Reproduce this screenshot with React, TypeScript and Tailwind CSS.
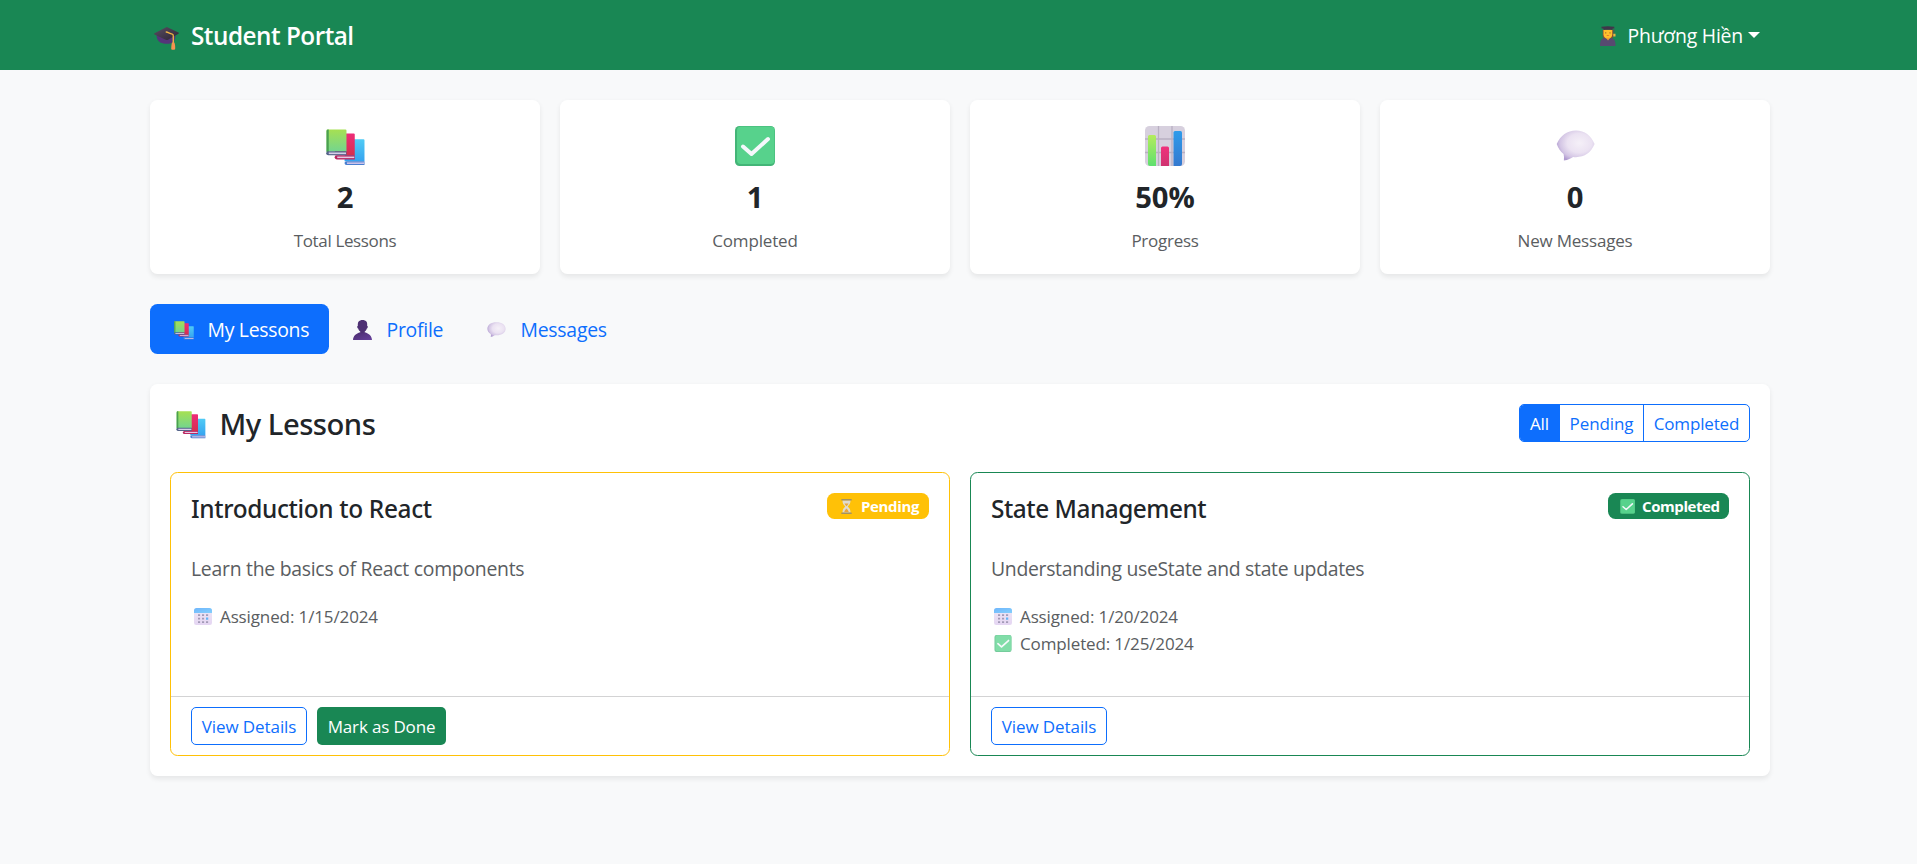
import type { ReactNode } from "react";

type IconProps = { className?: string };

function Gradient({ id, from, to, x2 = "0", y2 = "1" }: { id: string; from: string; to: string; x2?: string; y2?: string }) {
  return (
    <linearGradient id={id} x1="0" y1="0" x2={x2} y2={y2}>
      <stop offset="0" stopColor={from} />
      <stop offset="1" stopColor={to} />
    </linearGradient>
  );
}

function IconGradients() {
  return (
    <svg width="0" height="0" className="absolute" aria-hidden="true">
      <defs>
        <Gradient id="bookGreen" from="#a6e052" to="#74d58e" />
        <Gradient id="bookRed" from="#ee2b78" to="#d52f4e" />
        <Gradient id="bookBlue" from="#50cbf5" to="#36a4f0" />
        <Gradient id="barGreen" from="#b4ec5c" to="#5fe06f" />
        <Gradient id="barRed" from="#f0307c" to="#cf3370" />
        <Gradient id="barBlue" from="#2f9bea" to="#3479cf" />
        <Gradient id="person" from="#4a2d6e" to="#67409c" x2="1" />
        <Gradient id="calTop" from="#3f9dfb" to="#5cc0fb" x2="1" />
        <Gradient id="calBody" from="#e9e0f3" to="#dcc8ee" />
        <Gradient id="capTop" from="#5a4e63" to="#2c2435" x2="1" />
        <radialGradient id="bubble" cx="0.6" cy="0.42" r="0.64">
          <stop offset="0" stopColor="#f5f0f8" />
          <stop offset="0.5" stopColor="#ebe2f2" />
          <stop offset="0.8" stopColor="#d3c5e4" />
          <stop offset="1" stopColor="#b09bd0" />
        </radialGradient>
      </defs>
    </svg>
  );
}

function Books({ className }: IconProps) {
  return (
    <svg viewBox="0 0 40 38" className={className}>
      <path d="M20 12.5a2 2 0 0 1 2-2h16.5a1 1 0 0 1 1 1V33H19z" fill="url(#bookBlue)" />
      <path d="M21 33h18.5v4H21a2 2 0 0 1 0-4z" fill="#4a7fd0" />
      <path d="M21.5 34.3H39v1.6H21.5z" fill="#d3c6ec" />
      <path d="M9.500 6a2 2 0 0 1 2-1.500H28.500a1 1 0 0 1 1 1V27H9z" fill="url(#bookRed)" />
      <path d="M11 27h18.500v4.200H11a2.100 2.100 0 0 1 0-4.200z" fill="#b92560" />
      <path d="M11.500 28.300H29v1.600H11.500z" fill="#e6c8e4" />
      <path d="M.5 2a1.500 1.500 0 0 1 1.500-1.500H20a1 1 0 0 1 1 1V23H.5z" fill="url(#bookGreen)" />
      <path d="M.5 2A1.500 1.500 0 0 1 2 .5h.8V24H.5z" fill="#4aa050" />
      <path d="M2.300 22.800H21V27H2.300a2.100 2.100 0 0 1 0-4.200z" fill="#55648a" />
      <path d="M2.800 24.100h17.700v1.700H2.800z" fill="#d8cdea" />
    </svg>
  );
}

function Check({ className }: IconProps) {
  return (
    <svg viewBox="0 0 40 40" className={className}>
      <rect width="40" height="40" rx="4.500" fill="#43b577" />
      <rect x="2" y="0.500" width="37.500" height="37.500" rx="4" fill="#57d28c" />
      <path d="M8 20.500l8.500 7.500L33 13" fill="none" stroke="#f5f8fb" strokeWidth="4" strokeLinecap="round" strokeLinejoin="round" />
    </svg>
  );
}

function BarChart({ className }: IconProps) {
  return (
    <svg viewBox="0 0 40 40" className={className}>
      <rect width="40" height="40" rx="4.500" fill="#d7d0de" />
      <path d="M13.500 0v40M27 0v40M0 13h40M0 26.500h40" stroke="#b9b0c2" strokeWidth="1.300" />
      <path d="M3 10.500a1.500 1.500 0 0 1 1.500-1.500h5A1.500 1.500 0 0 1 11 10.500V40H5a2 2 0 0 1-2-2z" fill="url(#barGreen)" />
      <path d="M16 22a1.500 1.500 0 0 1 1.500-1.500h5A1.500 1.500 0 0 1 24 22v18h-8z" fill="url(#barRed)" />
      <path d="M28.500 6.500A1.500 1.500 0 0 1 30 5h5.500A1.500 1.500 0 0 1 37 6.500V38a2 2 0 0 1-2 2h-6.500z" fill="url(#barBlue)" />
    </svg>
  );
}

function Bubble({ className }: IconProps) {
  return (
    <svg viewBox="0 0 40 32" className={className}>
      <path d="M20.500.5C29.500.5 36 5.500 39.700 14.500 36 23.500 29.500 28 20.500 28c-1 0-2-.1-2.900-.2-2.200 1.500-5.100 3-9.600 3.700.3-2.300.2-4.600-.3-6.600C4.500 22.400 2.200 19 .6 14.500 4.500 5.500 11.500.5 20.500.5z" fill="url(#bubble)" />
    </svg>
  );
}

function RoundBubble({ className }: IconProps) {
  return (
    <svg viewBox="0 0 40 32" className={className}>
      <path d="M20 .5c11.500 0 19.500 5.800 19.500 13.900S31.500 28.500 20 28.500c-1.300 0-2.500-.1-3.700-.2-2.200 1.900-5 3-8.800 3.400.8-2 .9-4 .3-6C3.300 23 .5 19.200 .5 14.400.5 6.300 8.500.5 20 .5z" fill="url(#bubble)" />
    </svg>
  );
}

function Person({ className }: IconProps) {
  return (
    <svg viewBox="0 0 38 40" className={className}>
      <path d="M10.500 4C13 .8 16 0 19 0s6.500.8 8.500 4c1 3 1 5 .8 7.500 2 .2 1.700 5-.9 6-.7 2.600-2.200 4.500-3.900 5.500v3.500h-9V23c-1.700-1-3.200-2.900-3.900-5.500-2.600-1-2.900-5.800-.9-6C9.500 9 9.600 7 10.500 4z" fill="#4e3073" />
      <path d="M14.500 24.500c3 2 6 2 9 0C32 27 37.500 32 38 40H0c.5-8 6-13 14.500-15.500z" fill="url(#person)" />
    </svg>
  );
}

function Calendar({ className }: IconProps) {
  return (
    <svg viewBox="0 0 36 34" className={className}>
      <rect y="2" width="36" height="32" rx="4.500" fill="url(#calBody)" />
      <path d="M0 10V5a5 5 0 0 1 5-5h26a5 5 0 0 1 5 5v5z" fill="url(#calTop)" />
      <path d="M8 12.500h4.200v3.500H8zm8 0h4.200v3.500H16zm8 0h4.200v3.500H24zM8 19.500h4.200V23H8zm8 0h4.200V23H16zM8 26.500h4.200V30H8zm8 0h4.200V30H16zm8 0h4.200V30H24z" fill="#85799f" />
      <path d="M24 19h4.500v4.500H24z" fill="#2e9bf5" />
    </svg>
  );
}

function Hourglass({ className }: IconProps) {
  return (
    <svg viewBox="0 0 22 30" className={className}>
      <path d="M3 2.500h16c0 6-1.500 8.500-5.500 12.500 4 4 5.500 6.500 5.500 12.500H3c0-6 1.500-8.500 5.500-12.500C4.500 11 3 8.500 3 2.500z" fill="#e0dccf" />
      <path d="M7 9h8c-1 2.200-2.300 3.700-4 5.300-1.700-1.600-3-3.100-4-5.300zM11 19c2 2.300 3.700 4 4.500 7h-9c.8-3 2.500-4.700 4.500-7z" fill="#e8a53c" />
      <rect x=".5" y="0" width="21" height="3" rx="1" fill="#a39262" />
      <rect x=".5" y="27" width="21" height="3" rx="1" fill="#a39262" />
    </svg>
  );
}

function GraduationCap({ className }: IconProps) {
  return (
    <svg viewBox="0 0 48 44" className={className}>
      <path d="M5 14l19 9 17-9c.5 8-1 13-5 15.500-6 3.500-16 3.500-24 0C7 27 4.500 22 5 14z" fill="#553579" />
      <path d="M23.500.3a3 3 0 0 1 2.200 0L47 10.500c1.200.6 1.200 1.700 0 2.300L27 24.500a5 5 0 0 1-4.500 0L1 14.200c-1.200-.6-1.200-1.600 0-2.200z" fill="url(#capTop)" />
      <path d="M23.500 9.500c4 .5 6.500 3.500 11.500 4 1.800.3 2 2 2 3.500v13" fill="none" stroke="#f2b544" strokeWidth="2.600" strokeLinecap="round" />
      <path d="M34.500 29.500h4.500c1.500 3 2 8 1.500 13-2 1.700-5 1.700-7.500.3.200-5 .5-10 1.500-13.300z" fill="#f69350" />
    </svg>
  );
}

function Student({ className }: IconProps) {
  return (
    <svg viewBox="0 0 32 40" className={className}>
      <path d="M9 24h13c6 .5 9 4.500 9 16H0c0-11.500 3-15.500 9-16z" fill="#574a70" />
      <path d="M5.500 8h21v11c0 3-1 4.500-2.500 5.500H8C6.500 23.500 5.500 22 5.500 19z" fill="#8a4a34" />
      <path d="M7 7.500h17.500v9.500c0 5-4 8.500-8.700 8.500S7 22 7 17z" fill="#ffc02c" />
      <path d="M12 23.500h8l-4 5.500z" fill="#f0a12c" />
      <path d="M11.500 12.500v2.500M20 12.500v2.500" stroke="#7a4630" strokeWidth="1.600" />
      <path d="M12.500 18.500c2 2 4.500 2 6.500 0z" fill="#d9532f" />
      <path d="M3 1.500C11 0 20 0 28.500 1.500V4.500L25 5.500V8C19 7 12.500 7 7 8V5.500l-4-1z" fill="#40364a" />
      <path d="M28.200 4.500v11" stroke="#5b4a52" strokeWidth="1.200" />
      <path d="M26.500 15.500H31V21h-4.500z" fill="#edb43e" />
    </svg>
  );
}

const stats: { icon: ReactNode; value: string; label: string; spacing: string }[] = [
  { icon: <Books className="mt-[2px] h-[37px] w-[39px]" />, value: "2", label: "Total Lessons", spacing: "tracking-[-0.36px]" },
  { icon: <Check className="size-10" />, value: "1", label: "Completed", spacing: "tracking-[-0.16px]" },
  { icon: <BarChart className="size-10" />, value: "50%", label: "Progress", spacing: "tracking-[-0.27px]" },
  { icon: <Bubble className="-mt-px h-[31px] w-[39px]" />, value: "0", label: "New Messages", spacing: "tracking-[-0.2px]" },
];

function DetailsButton() {
  return (
    <button className="flex h-[38px] w-[116px] items-center justify-center rounded-[5px] border border-[#0d6efd] pt-px text-[17px] tracking-[-0.08px] text-[#0d6efd]">
      View Details
    </button>
  );
}

function LessonCard({ border, title, badge, description, dates, actions }: { border: string; title: ReactNode; badge: ReactNode; description: ReactNode; dates: ReactNode; actions: ReactNode }) {
  return (
    <article className={`flex h-[284px] flex-1 flex-col rounded-[7.5px] border ${border}`}>
      <div className="flex-1 pr-[21px] pl-5 pt-5">
        <div className="flex items-start justify-between">
          <h5 className="mt-[1px] h-[30px] font-['Noto_Sans'] text-[24.4px] leading-[30px] font-medium">{title}</h5>
          {badge}
        </div>
        <p className="mt-[30px] text-[19.4px] leading-[30px] text-[#5a5d61]">{description}</p>
        <div className="mt-[19px] text-[17px] leading-[27px] text-[#5a5d61]">{dates}</div>
      </div>
      <div className="flex h-[59px] gap-[10px] border-t border-[#d3d3d4] px-5 pt-[10px]">{actions}</div>
    </article>
  );
}

function DateLine({ icon, children }: { icon: ReactNode; children: ReactNode }) {
  return (
    <div className="flex items-center">
      <span className="ml-[3px] w-[26px] opacity-75">{icon}</span>
      {children}
    </div>
  );
}

export default function App() {
  return (
    <div className="min-h-[864px] bg-[#f8f9fa] font-['Open_Sans',sans-serif] text-[#212529]">
      <IconGradients />
      <header className="flex h-[70px] items-center justify-between bg-[#198754] pr-[157px] pl-[154px] text-white">
        <div className="flex items-center">
          <GraduationCap className="mt-[6px] mr-[12px] h-[23px] w-[25px]" />
          <span className="pt-px text-[24.3px] leading-9 font-semibold tracking-[-0.5px]">Student Portal</span>
        </div>
        <div className="flex items-center">
          <Student className="mt-[2px] mr-[12px] h-[20px] w-[16px]" />
          <span className="pt-px text-[19.4px] leading-[30px] tracking-[-0.2px]">Phương Hiền</span>
          <svg viewBox="0 0 12 6" className="ml-[5px] h-[6px] w-[12px]">
            <path d="M0 0h12L6 6z" fill="#fff" />
          </svg>
        </div>
      </header>

      <main className="ml-[150px] w-[1620px] pt-[30px]">
        <section className="grid grid-cols-4 gap-5">
          {stats.map((s) => (
            <div key={s.label} className="flex h-[174px] flex-col items-center rounded-[7.5px] bg-white pt-[26px] shadow-[0_2.5px_5px_rgba(0,0,0,0.075)]">
              <div className="flex h-10 items-center">{s.icon}</div>
              <div className="mt-[13px] h-9 text-[29.2px] leading-9 font-bold">{s.value}</div>
              <div className={`mt-[13px] text-[17px] leading-[26px] text-[#5a5d61] ${s.spacing}`}>{s.label}</div>
            </div>
          ))}
        </section>

        <nav className="mt-[30px] flex h-[50px] text-[19.4px] text-[#0d6efd]">
          <a className="flex w-[179px] items-center rounded-[7.5px] bg-[#0d6efd] pl-6 text-white">
            <Books className="mt-[2px] mr-[13.5px] h-[19px] w-[20px]" />
            <span className="pt-px tracking-[-0.28px]">My Lessons</span>
          </a>
          <a className="flex w-[134px] items-center pl-6">
            <Person className="mt-[2px] mr-[14.5px] h-[20px] w-[19px]" />
            <span className="pt-px tracking-[-0.25px]">Profile</span>
          </a>
          <a className="flex items-center pl-6">
            <RoundBubble className="mr-[14.5px] h-[15px] w-[19px]" />
            <span className="pt-px tracking-[-0.24px]">Messages</span>
          </a>
        </nav>

        <section className="mt-[30px] h-[392px] rounded-[7.5px] bg-white p-5 shadow-[0_2.5px_5px_rgba(0,0,0,0.075)]">
          <div className="flex h-[38px] items-center justify-between">
            <h2 className="flex items-center pl-[6px] font-['Noto_Sans'] text-[29.2px] leading-9 font-medium tracking-[-0.5px]">
              <Books className="mt-[4px] mr-[13.5px] h-[28px] w-[30px]" />
              <span className="pt-px">My Lessons</span>
            </h2>
            <div className="flex h-[38px] w-[231px] overflow-hidden rounded-[5px] border border-[#0d6efd] text-[17px] text-[#0d6efd]">
              <button className="w-[40px] bg-[#0d6efd] pt-px pr-px tracking-[-0.1px] text-white">All</button>
              <button className="w-[84px] border-r border-[#0d6efd] pt-px tracking-[-0.1px]">Pending</button>
              <button className="flex-1 pt-px tracking-[-0.16px]">Completed</button>
            </div>
          </div>

          <div className="mt-[30px] flex gap-5">
            <LessonCard
              border="border-[#ffc107]"
              title={<span className="tracking-[-0.35px]">Introduction to React</span>}
              badge={
                <span className="-mr-px flex h-[26px] w-[102px] items-center rounded-[7.5px] bg-[#ffc107] pl-[14px] text-[15px] font-bold tracking-[-0.36px] text-white">
                  <Hourglass className="mr-[9px] h-[15px] w-[11px]" />
                  Pending
                </span>
              }
              description={<span className="tracking-[-0.27px]">Learn the basics of React components</span>}
              dates={
                <DateLine icon={<Calendar className="h-[17px] w-[18px]" />}>
                  <span className="tracking-[-0.12px]">Assigned: 1/15/2024</span>
                </DateLine>
              }
              actions={
                <>
                  <DetailsButton />
                  <button className="flex h-[38px] w-[129px] items-center justify-center rounded-[5px] bg-[#198754] pt-px text-[17px] tracking-[-0.16px] text-white">
                    Mark as Done
                  </button>
                </>
              }
            />
            <LessonCard
              border="border-[#198754]"
              title={<span className="tracking-[-0.48px]">State Management</span>}
              badge={
                <span className="-mr-px flex h-[26px] w-[121px] items-center rounded-[7.5px] bg-[#198754] pl-[12px] text-[15px] font-bold tracking-[-0.42px] text-white">
                  <Check className="mr-[7px] size-[15px]" />
                  Completed
                </span>
              }
              description={<span className="tracking-[-0.31px]">Understanding useState and state updates</span>}
              dates={
                <>
                  <DateLine icon={<Calendar className="h-[17px] w-[18px]" />}>
                    <span className="tracking-[-0.12px]">Assigned: 1/20/2024</span>
                  </DateLine>
                  <DateLine icon={<Check className="h-[17px] w-[18px]" />}>
                    <span className="tracking-[-0.13px]">Completed: 1/25/2024</span>
                  </DateLine>
                </>
              }
              actions={<DetailsButton />}
            />
          </div>
        </section>
      </main>
    </div>
  );
}
